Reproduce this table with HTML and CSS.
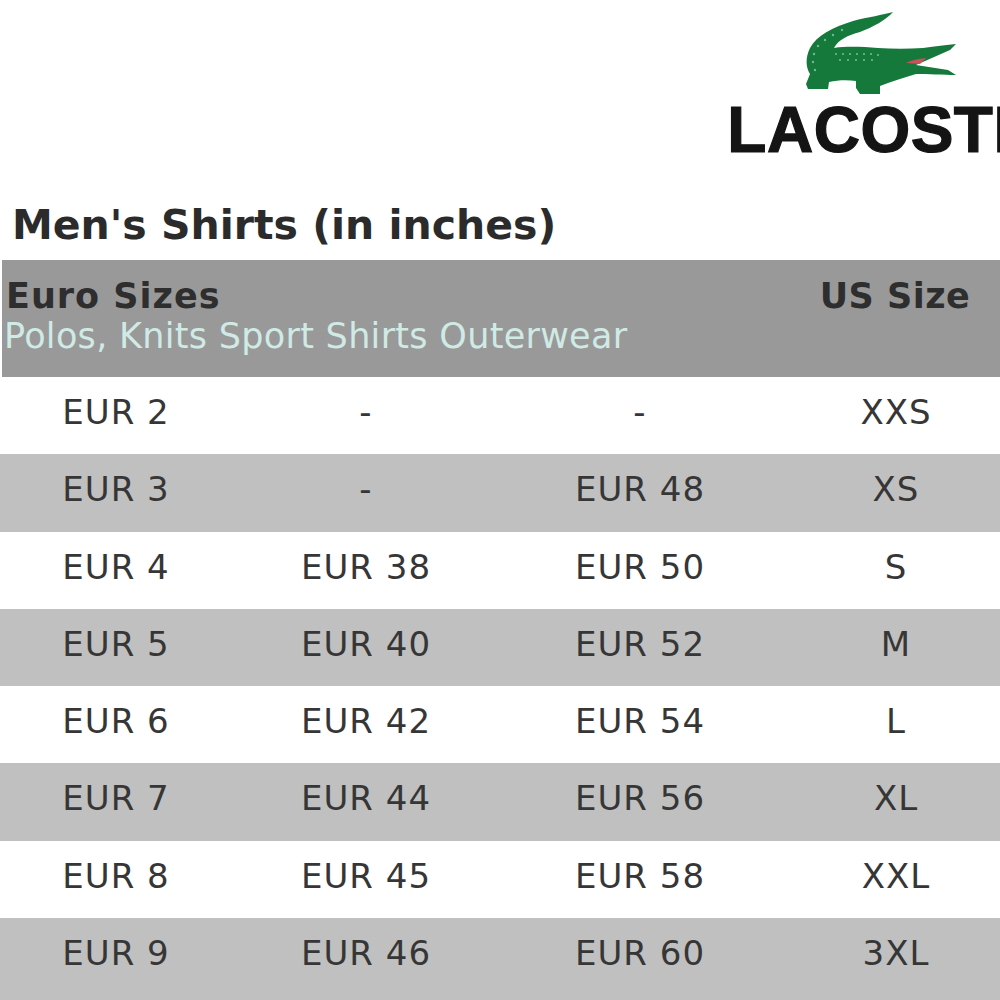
FILE: index.html
```html
<!DOCTYPE html>
<html>
<head>
<meta charset="utf-8">
<link rel="stylesheet" href="styles.css">
</head>
<body>
<div class="page">
  <div class="brand">
    <svg class="croc" viewBox="0 0 160 90" width="160" height="90" aria-hidden="true">
      <path fill="#16793c" d="M95,4 C85,7 70,9 55,13 C35,19 18,28 12,40 C7,50 8,60 12,66 L8,76 L10,81 L30,81 L31,74 C40,72 50,72 58,73 L58,80 L62,86 L82,86 L82,78 C92,74 105,70 118,66 C130,66 145,67 158,67 L150,62 L118,57 L152,42 L158,36 C145,37 135,39 125,40 C110,41 95,41 80,40 C65,39 50,38 36,40 C40,32 50,27 62,24 C75,19 88,12 95,4 Z"/>
      <path fill="#c9505c" d="M108,55 C114,52 120,51 128,50 L122,56 Z"/>
      <g fill="#8fd0a8" opacity="0.75">
        <circle cx="20" cy="38" r="1.2"/><circle cx="27" cy="32" r="1.2"/><circle cx="35" cy="27" r="1.2"/><circle cx="44" cy="22" r="1.2"/>
        <circle cx="16" cy="46" r="1.2"/><circle cx="15" cy="54" r="1.2"/><circle cx="17" cy="62" r="1.2"/>
        <circle cx="38" cy="46" r="1.1"/><circle cx="45" cy="46" r="1.1"/><circle cx="52" cy="46" r="1.1"/>
        <circle cx="59" cy="46" r="1.1"/><circle cx="66" cy="46" r="1.1"/><circle cx="73" cy="46" r="1.1"/><circle cx="80" cy="47" r="1.1"/>
        <circle cx="42" cy="52" r="1.1"/><circle cx="50" cy="52" r="1.1"/><circle cx="58" cy="52" r="1.1"/>
        <circle cx="66" cy="52" r="1.1"/><circle cx="74" cy="52" r="1.1"/>
      </g>
    </svg>
    <div class="wordmark">LACOSTE</div>
  </div>

  <h1 class="title">Men's Shirts (in inches)</h1>

  <div class="chart">
    <div class="head">
      <div class="head-left">
        <div class="head-label">Euro Sizes</div>
        <div class="head-sub">Polos, Knits Sport Shirts Outerwear</div>
      </div>
      <div class="head-label head-us">US Size</div>
    </div>

    <div class="row"><div class="cell">EUR 2</div><div class="cell">-</div><div class="cell">-</div><div class="cell">XXS</div></div>
    <div class="row alt"><div class="cell">EUR 3</div><div class="cell">-</div><div class="cell">EUR 48</div><div class="cell">XS</div></div>
    <div class="row"><div class="cell">EUR 4</div><div class="cell">EUR 38</div><div class="cell">EUR 50</div><div class="cell">S</div></div>
    <div class="row alt"><div class="cell">EUR 5</div><div class="cell">EUR 40</div><div class="cell">EUR 52</div><div class="cell">M</div></div>
    <div class="row"><div class="cell">EUR 6</div><div class="cell">EUR 42</div><div class="cell">EUR 54</div><div class="cell">L</div></div>
    <div class="row alt"><div class="cell">EUR 7</div><div class="cell">EUR 44</div><div class="cell">EUR 56</div><div class="cell">XL</div></div>
    <div class="row"><div class="cell">EUR 8</div><div class="cell">EUR 45</div><div class="cell">EUR 58</div><div class="cell">XXL</div></div>
    <div class="row alt last"><div class="cell">EUR 9</div><div class="cell">EUR 46</div><div class="cell">EUR 60</div><div class="cell">3XL</div></div>
  </div>
</div>
</body>
</html>
```

FILE: styles.css
```css
html, body {
  margin: 0;
  padding: 0;
  background: #ffffff;
  overflow: hidden;
}

.page {
  width: 1000px;
  height: 1000px;
  overflow: hidden;
  font-family: "DejaVu Sans", Verdana, sans-serif;
  color: #333333;
}

.brand {
  margin-left: 722px;
  width: 320px;
  padding-top: 8px;
  display: flex;
  flex-direction: column;
  align-items: center;
}

.croc {
  display: block;
  margin-left: -8px;
}

.wordmark {
  font-family: "Liberation Sans", Arial, sans-serif;
  font-weight: bold;
  font-size: 64px;
  line-height: 64px;
  letter-spacing: 0.5px;
  color: #141414;
  -webkit-text-stroke: 1.2px #141414;
  white-space: nowrap;
}

.title {
  margin: 43px 0 0 12px;
  font-size: 41px;
  line-height: 41px;
  font-weight: bold;
  color: #2b2b2b;
  white-space: nowrap;
}

.chart {
  margin-top: 14px;
  width: 1012px;
}

.head {
  height: 117px;
  background: #999999;
  display: grid;
  grid-template-columns: 780px 232px;
  box-sizing: border-box;
  padding-top: 16px;
  margin-left: 2px;
}

.head-left {
  padding-left: 4px;
}

.head-label {
  font-weight: bold;
  font-size: 35px;
  line-height: 40px;
  letter-spacing: 1px;
  color: #2e2e2e;
  white-space: nowrap;
}

.head-us {
  text-align: center;
  padding-right: 6px;
  letter-spacing: 0.5px;
}

.head-sub {
  margin-left: -2px;
  font-size: 35px;
  line-height: 40px;
  letter-spacing: 0.3px;
  color: #d0eae5;
  white-space: nowrap;
}

.row {
  display: grid;
  grid-template-columns: 232px 268px 280px 232px;
  height: 77.3px;
  background: #ffffff;
}

.row.alt {
  background: #c0c0c0;
}

.row.last {
  height: 84px;
}

.cell {
  text-align: center;
  padding-top: 18px;
  font-size: 34px;
  line-height: 34px;
  letter-spacing: 1px;
  color: #363636;
  white-space: nowrap;
}
```
